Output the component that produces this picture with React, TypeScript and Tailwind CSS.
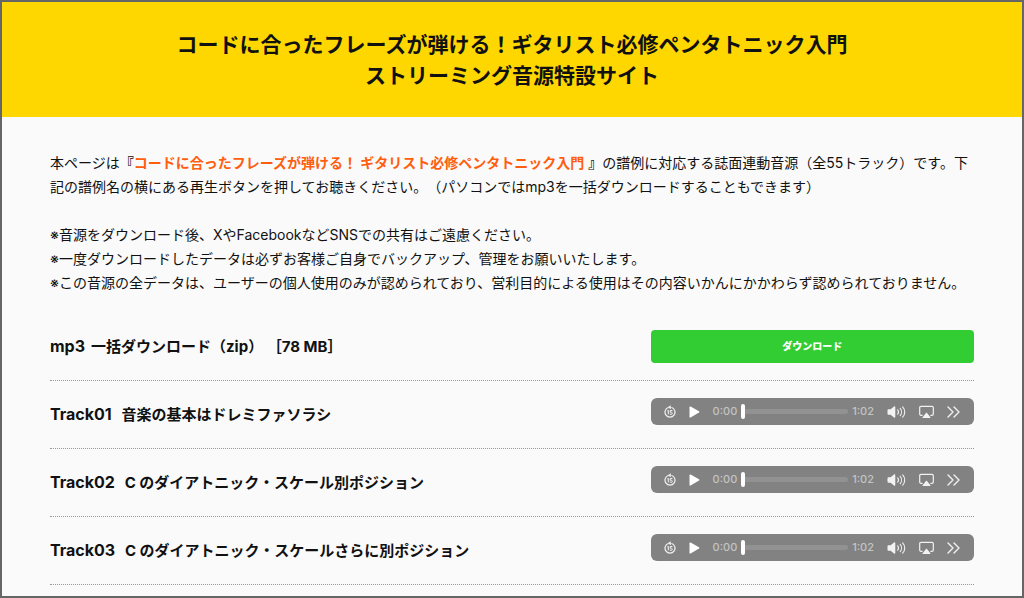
import React, { useState } from 'react';

const tracks = [
  { id: 'Track01', title: '音楽の基本はドレミファソラシ', duration: '1:02' },
  { id: 'Track02', title: 'C のダイアトニック・スケール別ポジション', duration: '1:02' },
  { id: 'Track03', title: 'C のダイアトニック・スケールさらに別ポジション', duration: '1:02' },
];

function RewindIcon() {
  return (
    <svg width="12" height="14" viewBox="0 0 12 14" fill="none" aria-hidden="true">
      <path d="M4.2 2.5A5 5 0 1 0 7.8 2.5" stroke="currentColor" strokeWidth="1.2" strokeLinecap="round" />
      <path d="M6.8 0.2V4.2L3.8 2.2Z" fill="currentColor" />
      <path d="M3.4 5.9L4.3 5.3V9.4M8.4 5.5H6.3L6.1 7.2C8.9 6.6 8.9 9.6 6.9 9.4L5.8 8.9" stroke="currentColor" strokeWidth="1" />
    </svg>
  );
}

function PlayIcon() {
  return (
    <svg width="11" height="12" viewBox="0 0 11 12" aria-hidden="true">
      <path d="M0.5 1.1C0.5 0.5 1 0.2 1.6 0.5L10 5.3C10.5 5.6 10.5 6.3 10 6.6L1.6 11.5C1 11.8 0.5 11.5 0.5 10.9Z" fill="currentColor" />
    </svg>
  );
}

function VolumeIcon() {
  return (
    <svg width="19" height="14" viewBox="0 0 19 14" fill="none" aria-hidden="true">
      <path d="M0.5 5.2C0.5 4.6 0.9 4.3 1.4 4.3H3.6L7 1.4C7.6 0.9 8.3 1.2 8.3 1.9V12.1C8.3 12.8 7.6 13.1 7 12.6L3.6 9.7H1.4C0.9 9.7 0.5 9.4 0.5 8.8Z" fill="currentColor" />
      <path d="M10.7 4.8C11.7 6.1 11.7 7.9 10.7 9.2M13.2 3.3C15 5.4 15 8.6 13.2 10.7M15.7 1.8C18.4 4.8 18.4 9.2 15.7 12.2" stroke="currentColor" strokeWidth="1.1" strokeLinecap="round" />
    </svg>
  );
}

function AirPlayIcon() {
  return (
    <svg width="15" height="14" viewBox="0 0 15 14" fill="none" aria-hidden="true">
      <path d="M3.6 10.3H2C1.1 10.3 0.7 9.8 0.7 9V2.7C0.7 1.9 1.1 1.4 2 1.4H13C13.9 1.4 14.3 1.9 14.3 2.7V9C14.3 9.8 13.9 10.3 13 10.3H11.4" stroke="currentColor" strokeWidth="1.2" />
      <path d="M7 8.1C7.3 7.7 7.7 7.7 8 8.1L11.4 12.2C11.7 12.6 11.5 12.9 11.1 12.9H3.9C3.5 12.9 3.3 12.6 3.6 12.2Z" fill="currentColor" />
    </svg>
  );
}

function MoreIcon() {
  return (
    <svg width="13" height="12" viewBox="0 0 13 12" fill="none" aria-hidden="true">
      <path d="M1 1L6 6L1 11M7 1L12 6L7 11" stroke="currentColor" strokeWidth="1.4" strokeLinecap="round" strokeLinejoin="round" />
    </svg>
  );
}

function AudioPlayer({ name, duration }: { name: string; duration: string }) {
  const [position, setPosition] = useState(0);

  return (
    <div className="flex h-[27px] w-full items-center gap-[13px] rounded-md bg-[#828282] pr-[14px] pl-[13px] text-[#f2f2f2]">
      <button type="button" aria-label="15秒戻る" onClick={() => setPosition(0)}>
        <RewindIcon />
      </button>
      <button type="button" aria-label={`${name} を再生`} className="text-white">
        <PlayIcon />
      </button>
      <div className="flex min-w-0 flex-1 items-center gap-1 text-[11px] leading-none font-medium text-[#c4c4c4]">
        <span>0:00</span>
        <input
          type="range"
          min={0}
          max={62}
          value={position}
          onChange={(e) => setPosition(Number(e.target.value))}
          aria-label={`${name} の再生位置`}
          className="h-[15px] min-w-0 flex-1 appearance-none bg-transparent [&::-webkit-slider-runnable-track]:h-[5px] [&::-webkit-slider-runnable-track]:rounded-sm [&::-webkit-slider-runnable-track]:bg-[#929292] [&::-webkit-slider-thumb]:-mt-[5px] [&::-webkit-slider-thumb]:h-[15px] [&::-webkit-slider-thumb]:w-[4px] [&::-webkit-slider-thumb]:appearance-none [&::-webkit-slider-thumb]:rounded-sm [&::-webkit-slider-thumb]:bg-white"
        />
        <span>{duration}</span>
      </div>
      <button type="button" aria-label="音量">
        <VolumeIcon />
      </button>
      <button type="button" aria-label="AirPlay">
        <AirPlayIcon />
      </button>
      <button type="button" aria-label="その他">
        <MoreIcon />
      </button>
    </div>
  );
}

function Row({ label, title, children }: { label: string; title: string; children: React.ReactNode }) {
  return (
    <li className="flex justify-between border-b border-dotted border-[#999999] py-[17px]">
      <h2 className="flex items-baseline gap-1.5 text-[15px] leading-[33px] font-bold">
        <span className="text-base leading-[33px] whitespace-pre">{label}</span>
        <span>{title}</span>
      </h2>
      <div className="h-[33px] w-[35%]">{children}</div>
    </li>
  );
}

export default function App() {
  return (
    <div
      lang="ja"
      className="min-h-screen border-2 border-[#666666] bg-[#fafafa] font-[Inter,'Noto_Sans_CJK_JP',sans-serif] text-[#111111] [text-spacing-trim:space-all]"
    >
      <header className="bg-[#ffd700] px-12 pt-[27px] pb-[26px] text-center">
        <h1 className="text-[21px] leading-[31px] font-bold">
          コードに合ったフレーズが弾ける！ギタリスト必修ペンタトニック入門
          <br />
          ストリーミング音源特設サイト
        </h1>
      </header>

      <main className="px-12 pt-[34px]">
        <p className="text-sm leading-6">
          本ページは<b>『</b>
          <a href="#book" className="font-bold text-[#ff5e0e]">
            コードに合ったフレーズが弾ける！ ギタリスト必修ペンタトニック入門
          </a>{' '}
          <b>』</b>の譜例に対応する誌面連動音源（全55トラック）です。下記の譜例名の横にある再生ボタンを押してお聴きください。（パソコンではmp3を一括ダウンロードすることもできます）
        </p>
        <p className="mt-6 text-sm leading-6">
          ※音源をダウンロード後、XやFacebookなどSNSでの共有はご遠慮ください。
          <br />
          ※一度ダウンロードしたデータは必ずお客様ご自身でバックアップ、管理をお願いいたします。
          <br />
          ※この音源の全データは、ユーザーの個人使用のみが認められており、営利目的による使用はその内容いかんにかかわらず認められておりません。
        </p>

        <ul className="mt-[18px]">
          <Row label="mp3" title="一括ダウンロード（zip） ［78 MB］">
            <button
              type="button"
              className="h-full w-full rounded bg-[#32cd32] text-[10px] font-black text-white"
            >
              ダウンロード
            </button>
          </Row>
          {tracks.map((track) => (
            <Row key={track.id} label={`${track.id} `} title={track.title}>
              <AudioPlayer name={track.id} duration={track.duration} />
            </Row>
          ))}
        </ul>
      </main>
    </div>
  );
}
